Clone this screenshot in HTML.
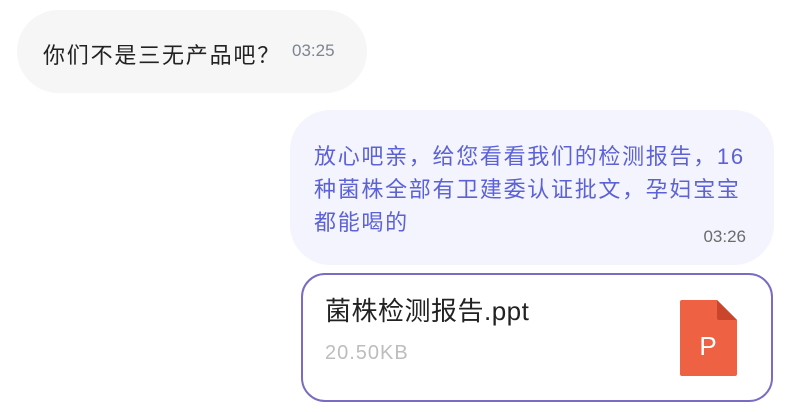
<!DOCTYPE html>
<html><head><meta charset="utf-8"><style>
body{margin:0;width:795px;height:412px;background:#fff;position:relative;overflow:hidden;font-family:"Liberation Sans","Noto Sans CJK SC",sans-serif}
.b1{position:absolute;left:17px;top:10px;width:350px;height:83px;background:#f6f6f6;border-radius:42px}
.t1{position:absolute;left:43px;top:38px;font-size:22px;color:#222;white-space:nowrap;letter-spacing:1.8px}
.tm1{position:absolute;left:292px;top:41px;font-size:17px;color:#7c8592}
.b2{position:absolute;left:290px;top:110px;width:484px;height:155px;background:#f4f4fe;border-radius:40px}
.t2{position:absolute;left:314px;top:140px;font-size:22px;line-height:33px;color:#5c62d6;white-space:nowrap;letter-spacing:1.7px}
.tm2{position:absolute;right:49px;top:227px;font-size:17px;color:#6b6b6b}
.card{position:absolute;left:301px;top:273px;width:468px;height:125px;border:2px solid #7b6bc2;border-radius:24px;background:#fff}
.ft{position:absolute;left:325px;top:291px;font-size:26px;color:#222;letter-spacing:0.5px}
.fs{position:absolute;left:325px;top:342px;font-size:20px;color:#bdbdbd;letter-spacing:1px}
</style></head><body>
<div class="b1"></div>
<div class="t1">你们不是三无产品吧？</div>
<div class="tm1">03:25</div>
<div class="b2"></div>
<div class="t2">放心吧亲，给您看看我们的检测报告，16<br>种菌株全部有卫建委认证批文，孕妇宝宝<br>都能喝的</div>
<div class="tm2">03:26</div>
<div class="card"></div>
<div class="ft">菌株检测报告.ppt</div>
<div class="fs">20.50KB</div>
<svg style="position:absolute;left:680px;top:300px" width="57" height="76" viewBox="0 0 57 76">
<path d="M2 0H37L57 20V74a2 2 0 0 1-2 2H2a2 2 0 0 1-2-2V2a2 2 0 0 1 2-2z" fill="#ee6142"/>
<path d="M37 0V18a2 2 0 0 0 2 2H57z" fill="#c9462d"/>
<text x="28" y="55" font-size="26" fill="#fff" text-anchor="middle" font-family="Liberation Sans,sans-serif">P</text>
</svg>
</body></html>
